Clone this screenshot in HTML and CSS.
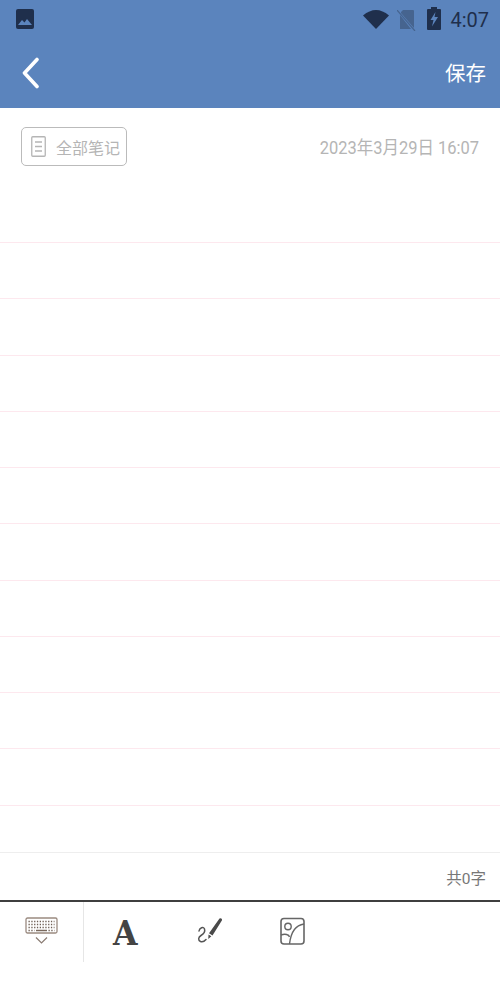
FILE: index.html
```html
<!DOCTYPE html>
<html lang="zh-CN">

<head>
    <meta charset="UTF-8">
    <meta name="viewport" content="width=device-width, initial-scale=1.0">
    <title>笔记</title>
    <link rel="stylesheet" href="styles.css">
</head>

<body>
    <div class="page">
        <header class="header">
            <div class="status-bar">
                <svg class="status-pic" width="18" height="20" viewBox="0 0 18 20">
                    <rect x="0" y="0" width="18" height="20" rx="2" fill="#1f2f4c" />
                    <path d="M2 16l4-5 2.500 2.500L11 10l5 6z" fill="#5b84bd" />
                </svg>
                <div class="status-right">
                    <svg class="status-wifi" width="26" height="21" viewBox="0 0 26 21">
                        <path d="M0 7.500Q13-3.500 26 7.500L13 21z" fill="#1f2f4c" />
                    </svg>
                    <svg class="status-sim" width="19" height="21" viewBox="0 0 19 21">
                        <path d="M6 0h10a1 1 0 0 1 1 1v17L4 3V2z" fill="#46648f" />
                        <path d="M3 5l11 14H3z" fill="#46648f" />
                        <path d="M0 0l18 21" stroke="#46648f" stroke-width="1.200" />
                    </svg>
                    <svg class="status-battery" width="14" height="23" viewBox="0 0 14 23">
                        <path d="M4 0h6v2h3a1 1 0 0 1 1 1v19a1 1 0 0 1-1 1H1a1 1 0 0 1-1-1V3a1 1 0 0 1 1-1h3z" fill="#1f2f4c" />
                        <path d="M8.500 5L3.500 13h3L5 19.500 11 10H7.500z" fill="#5b84bd" />
                    </svg>
                    <span class="status-time">4:07</span>
                </div>
            </div>
            <div class="title-bar">
                <svg width="18" height="32" viewBox="0 0 18 32">
                    <path d="M15 2.500L2.500 16 15 29.500" fill="none" stroke="#fff" stroke-width="3.600" stroke-linecap="round" stroke-linejoin="round" />
                </svg>
                <span class="save-btn">保存</span>
            </div>
        </header>

        <div class="meta-row">
            <div class="folder-tag">
                <svg width="15" height="21" viewBox="0 0 15 21">
                    <rect x="0.750" y="0.750" width="13.500" height="19.500" rx="1" fill="none" stroke="#b5b5b5" stroke-width="1.300" />
                    <path d="M4 6h7M4 10.500h7M4 15h7" stroke="#b5b5b5" stroke-width="1.300" />
                </svg>
                <span>全部笔记</span>
            </div>
            <span class="note-date">2023年3月29日 16:07</span>
        </div>

        <div class="lines">
            <div class="line"></div>
            <div class="line"></div>
            <div class="line"></div>
            <div class="line"></div>
            <div class="line"></div>
            <div class="line"></div>
            <div class="line"></div>
            <div class="line"></div>
            <div class="line"></div>
            <div class="line"></div>
            <div class="line"></div>
            <div class="line line-last"></div>
        </div>

        <div class="word-count">共0字</div>

        <footer class="toolbar">
            <div class="tool-keyboard">
                <svg width="34" height="28" viewBox="0 0 34 28">
                    <rect x="1" y="1" width="31" height="15" rx="1.500" fill="#fff" stroke="#9a8a80" stroke-width="1.300" />
                    <path d="M3.500 4.500h26M3.500 7.500h26M3.500 10.500h26" stroke="#6f5f55" stroke-width="1.300" stroke-dasharray="1.300 1.500" />
                    <path d="M3.500 13.500h6M23.500 13.500h6" stroke="#6f5f55" stroke-width="1.300" stroke-dasharray="1.300 1.500" />
                    <path d="M11 13.500h11" stroke="#7a6a5e" stroke-width="1.500" />
                    <path d="M11 20.500l5.500 5.500 5.500-5.500" fill="none" stroke="#8a7b72" stroke-width="1.200" />
                </svg>
            </div>
            <div class="tool-list">
                <span class="tool-font">A</span>
                <svg class="tool-brush" width="26" height="28" viewBox="0 0 26 28">
                    <path d="M22.500 1.500a1.600 1.600 0 0 1 2.500 1.700L15.500 18.500l-3.500-2.300z" fill="#4a4a4a" />
                    <path d="M11.500 17.500l2.800 1.800-3 2.700z" fill="#4a4a4a" />
                    <path d="M2 14c.5-3 4.500-5 5.500-2 .8 2.500-1 5-3.500 6.500-3 1.800-3 5-.5 6 2 .8 4-.3 5.500-2" fill="none" stroke="#555" stroke-width="1.500" stroke-linecap="round" />
                </svg>
                <svg class="tool-image" width="25" height="28" viewBox="0 0 25 28">
                    <rect x="1" y="1.500" width="23" height="25.500" rx="3" fill="none" stroke="#666" stroke-width="1.600" />
                    <circle cx="8" cy="9.500" r="3.200" fill="none" stroke="#666" stroke-width="1.400" />
                    <path d="M24 7C16 8 11 14 9.500 27M1 18c4-1.500 8-.5 8.500 2" fill="none" stroke="#666" stroke-width="1.400" />
                </svg>
            </div>
        </footer>
    </div>
</body>

</html>
```

FILE: styles.css
```css
body {
    margin: 0;
    background-color: #fff;
    font-family: "Roboto", "Noto Sans CJK SC", sans-serif;
}

.page {
    width: 500px;
    height: 1000px;
    display: flex;
    flex-direction: column;
    overflow: hidden;
}

.header {
    height: 108px;
    background-color: #5b84bd;
    flex-shrink: 0;
}

.status-bar {
    height: 38px;
    padding: 9px 11px 0 16px;
    box-sizing: border-box;
    display: flex;
    justify-content: space-between;
    align-items: flex-start;
}

.status-right {
    display: flex;
    align-items: flex-start;
    gap: 9px;
}

.status-wifi {
    margin-top: -1px;
}

.status-sim {
    margin-top: 1px;
    margin-left: -1px;
}

.status-battery {
    margin-top: -2px;
    margin-left: 2px;
}

.status-time {
    font-size: 20px;
    line-height: 22px;
    color: #1f2f4c;
}

.title-bar {
    height: 70px;
    padding: 0 14px 0 22px;
    display: flex;
    justify-content: space-between;
    align-items: center;
}

.save-btn {
    font-size: 20.500px;
    color: #fff;
    margin-bottom: 3px;
}

.meta-row {
    height: 78.750px;
    padding: 19px 21px 0;
    box-sizing: border-box;
    display: flex;
    justify-content: space-between;
    align-items: flex-start;
    flex-shrink: 0;
}

.folder-tag {
    width: 106px;
    height: 39px;
    box-sizing: border-box;
    border: 1px solid #bbb;
    border-radius: 5px;
    padding-left: 9px;
    display: flex;
    align-items: center;
    gap: 10px;
    font-size: 16px;
    color: #b5b5b5;
}

.note-date {
    font-size: 18.500px;
    line-height: 42px;
    color: #b5b5b5;
    transform: scaleX(0.89);
    transform-origin: right center;
}

.line {
    height: 56.250px;
    box-sizing: border-box;
    border-bottom: 1px solid #fde8ee;
}

.line-last {
    height: 47px;
    border-bottom-color: #eee;
}

.word-count {
    height: 47px;
    padding-right: 14px;
    box-sizing: border-box;
    text-align: right;
    font-size: 15.500px;
    line-height: 52px;
    color: #777;
    flex-shrink: 0;
}

.toolbar {
    border-top: 2px solid #3f3f3f;
    display: flex;
    flex: 1;
    align-items: flex-start;
}

.tool-keyboard {
    width: 84px;
    height: 60px;
    box-sizing: border-box;
    border-right: 1px solid #e6e6e6;
    padding: 15px 0 0 25px;
}

.tool-list {
    display: flex;
    align-items: flex-start;
    padding: 15px 0 0 28px;
}

.tool-font {
    font-family: "DejaVu Serif", serif;
    font-size: 34px;
    font-weight: bold;
    line-height: 32px;
    color: #444;
    transform: scaleX(0.93);
}

.tool-brush {
    margin-left: 59px;
}

.tool-image {
    margin-left: 57px;
}
```
